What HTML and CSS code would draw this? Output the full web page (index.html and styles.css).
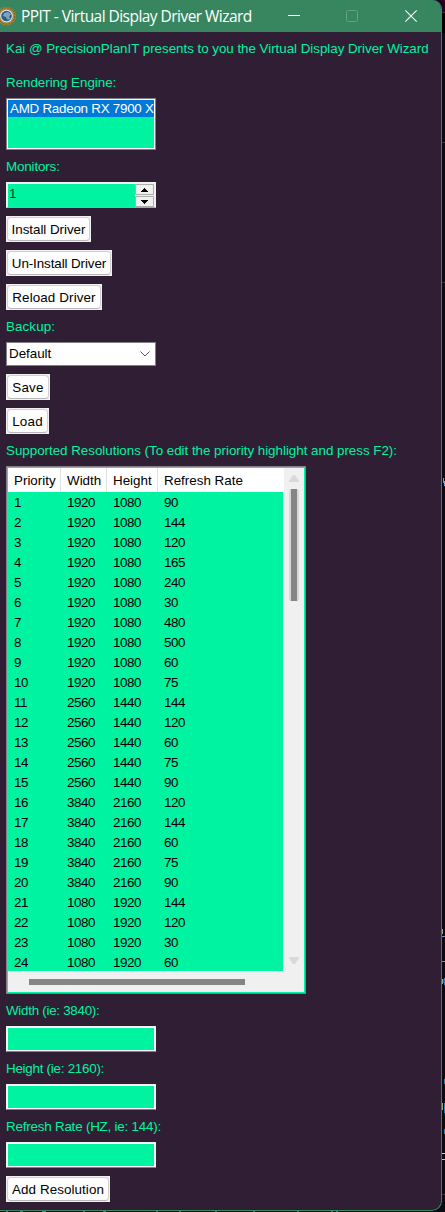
FILE: index.html
```html
<!DOCTYPE html>
<html lang="en">
<head>
<meta charset="utf-8">
<title>PPIT - Virtual Display Driver Wizard</title>
<link rel="stylesheet" href="styles.css">
</head>
<body>
<div class="window">
  <header class="titlebar">
    <svg class="logo" width="16" height="20" viewBox="0 0 16 20"><circle cx="6.500" cy="10" r="9.300" fill="#a98a45"/><circle cx="6.500" cy="10" r="8.200" fill="none" stroke="#6f5823" stroke-width="1" stroke-dasharray="2 1"/><circle cx="6.500" cy="10" r="6.300" fill="#e6ead8"/><circle cx="6.500" cy="10" r="5.300" fill="#255b9e"/><path d="M4 7l4-1 3 2-2 3 2 2-4 1-1-3-3-1z" fill="#7fa3bd"/><path d="M3 12l3 3 2-2z" fill="#25734c"/></svg>
    <h1 class="title">PPIT - Virtual Display Driver Wizard</h1>
    <div class="controls">
      <svg width="144" height="20" viewBox="0 0 144 20" fill="none"><path d="M2 9.500h12" stroke="#fff"/><rect x="60.500" y="4.500" width="11" height="11" rx="1" stroke="#62a080"/><path d="M119.300 4.300l11.400 11.400M130.700 4.300l-11.400 11.400" stroke="#fff" stroke-width="1.100"/></svg>
    </div>
  </header>
  <main class="form">
    <p class="label intro">Kai @ PrecisionPlanIT presents to you the Virtual Display Driver Wizard</p>
    <p class="label engine">Rendering Engine:</p>
    <div class="listbox"><div class="option">AMD Radeon RX 7900 X</div></div>
    <p class="label monitors">Monitors:</p>
    <div class="spinbox"><span class="value">1</span>
      <svg width="20" height="23" viewBox="0 0 20 23"><path d="M0 0h20v23H0z" fill="#f0f0f0"/><path d="M.5.500h18v10H.5zM.5 12.500h18v10H.5z" fill="#f0f0f0" stroke="#adadad"/><path d="M9 4h1v1h1v1h1v1h1v1H6V7h1V6h1V5h1zM6 16h7v1h-1v1h-1v1h-1v1H9v-1H8v-1H7v-1H6z" fill="#000"/></svg>
    </div>
    <div class="button install"><span>Install Driver</span></div>
    <div class="button uninstall"><span>Un-Install Driver</span></div>
    <div class="button reload"><span>Reload Driver</span></div>
    <p class="label backup">Backup:</p>
    <div class="combo"><span>Default</span><svg width="10" height="6" viewBox="0 0 10 6"><path d="M.5.500L5 5 9.500.500" fill="none" stroke="#555"/></svg></div>
    <div class="button save"><span>Save</span></div>
    <div class="button load"><span>Load</span></div>
    <p class="label supported">Supported Resolutions (To edit the priority highlight and press F2):</p>
    <div class="tree">
      <div class="table">
        <div class="row head"><span>Priority</span><span>Width</span><span>Height</span><span>Refresh Rate</span></div>
        <div class="row"><span>1</span><span>1920</span><span>1080</span><span>90</span></div>
        <div class="row"><span>2</span><span>1920</span><span>1080</span><span>144</span></div>
        <div class="row"><span>3</span><span>1920</span><span>1080</span><span>120</span></div>
        <div class="row"><span>4</span><span>1920</span><span>1080</span><span>165</span></div>
        <div class="row"><span>5</span><span>1920</span><span>1080</span><span>240</span></div>
        <div class="row"><span>6</span><span>1920</span><span>1080</span><span>30</span></div>
        <div class="row"><span>7</span><span>1920</span><span>1080</span><span>480</span></div>
        <div class="row"><span>8</span><span>1920</span><span>1080</span><span>500</span></div>
        <div class="row"><span>9</span><span>1920</span><span>1080</span><span>60</span></div>
        <div class="row"><span>10</span><span>1920</span><span>1080</span><span>75</span></div>
        <div class="row"><span>11</span><span>2560</span><span>1440</span><span>144</span></div>
        <div class="row"><span>12</span><span>2560</span><span>1440</span><span>120</span></div>
        <div class="row"><span>13</span><span>2560</span><span>1440</span><span>60</span></div>
        <div class="row"><span>14</span><span>2560</span><span>1440</span><span>75</span></div>
        <div class="row"><span>15</span><span>2560</span><span>1440</span><span>90</span></div>
        <div class="row"><span>16</span><span>3840</span><span>2160</span><span>120</span></div>
        <div class="row"><span>17</span><span>3840</span><span>2160</span><span>144</span></div>
        <div class="row"><span>18</span><span>3840</span><span>2160</span><span>60</span></div>
        <div class="row"><span>19</span><span>3840</span><span>2160</span><span>75</span></div>
        <div class="row"><span>20</span><span>3840</span><span>2160</span><span>90</span></div>
        <div class="row"><span>21</span><span>1080</span><span>1920</span><span>144</span></div>
        <div class="row"><span>22</span><span>1080</span><span>1920</span><span>120</span></div>
        <div class="row"><span>23</span><span>1080</span><span>1920</span><span>30</span></div>
        <div class="row"><span>24</span><span>1080</span><span>1920</span><span>60</span></div>
      </div>
      <div class="vscroll">
        <svg width="10" height="7" viewBox="0 0 10 7"><path d="M4 0h2l4 6v1H0V6z" fill="#d9d9d9"/></svg>
        <div class="vthumb"></div>
        <svg class="down" width="10" height="7" viewBox="0 0 10 7"><path d="M0 0h10v1L6 7H4L0 1z" fill="#d9d9d9"/></svg>
      </div>
      <div class="hscroll"><div class="hthumb"></div></div>
    </div>
    <p class="label width">Width (ie: 3840):</p>
    <div class="entry"></div>
    <p class="label height">Height (ie: 2160):</p>
    <div class="entry"></div>
    <p class="label refresh">Refresh Rate (HZ, ie: 144):</p>
    <div class="entry"></div>
    <div class="button add"><span>Add Resolution</span></div>
  </main>
</div>
<svg class="desktop" width="445" height="1212" viewBox="0 0 445 1212" shape-rendering="crispEdges">
  <path d="M0 0h445v1212H0z" fill="#090c11"/>
  <path d="M425 0h20v12h-20z" fill="#240022"/><path d="M442 12h3v1h-3z" fill="#572052"/><path d="M442 13h3v20h-3z" fill="#000"/>
  <path d="M442 142h3v1h-3zM442 282h3v1h-3zM442 1194h3v1h-3z" fill="#30343a"/>
  <path d="M442 936h3v1h-3zM442 961h3v1h-3z" fill="#6e98b4"/>
  <path d="M443 478h1v3h1v5h-1v-3h-1z" fill="#6aa5d8"/>
  <path d="M442 929h1v5h-1zM442 979h1v5h-1zM442 1103h1v7h-1z" fill="#a0a477"/>
  <path d="M443 979h1v4h-1z" fill="#b5203b"/><path d="M444 978h1v7h-1zM444 1079h1v5h-1zM444 1103h1v10h-1zM444 1129h1v5h-1z" fill="#2685b8"/>
  <path d="M442 1153h3v1h-3zM442 1159h3v1h-3z" fill="#c4c5ce"/>
  <path d="M6 1211h2v1H6zM20 1211h3v1h-3zM42 1211h4v1h-4zM83 1211h2v1h-2zM103 1211h3v1h-3zM156 1211h2v1h-2zM179 1211h2v1h-2zM215 1211h2v1h-2zM253 1211h2v1h-2zM297 1211h2v1h-2zM331 1211h2v1h-2zM336 1211h2v1h-2z" fill="#597274"/>
</svg>
</body>
</html>
```
FILE: styles.css
```css
* { box-sizing: border-box; }
body { margin: 0; width: 445px; height: 1212px; overflow: hidden; position: relative; font-family: "Liberation Sans", Arial, sans-serif; font-size: 13.4px; line-height: 18px; letter-spacing: -0.04px; color: #000; }
.desktop { position: absolute; left: 0; top: 0; z-index: -1; }
.window { width: 442px; height: 1211px; background: #301e34; border: solid #328761; border-width: 0 1px 1px 0; border-radius: 0 9px 10px 0; overflow: hidden; white-space: nowrap; }
.titlebar { height: 32px; width: 442px; background: #378660; display: flex; align-items: center; color: #fff; }
.logo { margin-right: 5px; flex: none; }
.title { margin: 0; width: 265px; font: 400 15.5px/20px "Open Sans", "Noto Sans", sans-serif; letter-spacing: -0.54px; }
.controls { display: flex; }
.form { padding: 8px 0 0 6px; display: flex; flex-direction: column; align-items: flex-start; gap: 8px; }
.label { margin: 0; height: 16px; color: #00f3a1; }
.intro { margin-bottom: 10px; }
.supported { letter-spacing: -0.03px; }
.monitors { letter-spacing: -0.15px; }
.backup { letter-spacing: 0.1px; }
.width { letter-spacing: -0.28px; }
.height { letter-spacing: -0.26px; }
.refresh { letter-spacing: -0.21px; }
.listbox { width: 150px; height: 52px; background: #00f3a1; border: 1px solid #828086; box-shadow: inset 0 0 0 1px #fff; padding: 1px; }
.option { height: 17px; background: #0078d7; color: #fff; padding-left: 2px; overflow: hidden; line-height: 18px; letter-spacing: -0.26px; }
.spinbox { width: 150px; height: 26px; background: #00f3a1; border: solid #f0f0f0; border-width: 2px 1px 1px 2px; border-bottom-color: #a5a3a7; display: flex; justify-content: space-between; }
.value { padding: 1px 0 0 1px; color: #033b29; }
.button { height: 26px; background: #f0f0f0; padding: 1px; }
.button span { display: flex; height: 24px; padding-top: 1px; justify-content: center; align-items: center; border: 1px solid #d0d0d0; border-bottom-color: #b8b8b8; border-radius: 4px; background: #fdfdfd; }
.install { width: 85px; }
.uninstall { width: 106px; letter-spacing: -0.1px; }
.reload { width: 96px; letter-spacing: 0.12px; }
.save { width: 44px; letter-spacing: 0.2px; }
.load { width: 43px; letter-spacing: 0.2px; }
.add { width: 104px; letter-spacing: 0.08px; }
.combo { width: 150px; height: 24px; border: 1px solid #828086; background: #fff; display: flex; align-items: center; justify-content: space-between; padding: 0 5px 0 2px; }
.tree { width: 300px; height: 528px; border: 1px solid #828086; box-shadow: inset 0 0 0 1px #00f3a1; padding: 1px; display: grid; grid-template: 503px 21px / 276px 20px; }
.table { overflow: hidden; background: #00f3a1; border-right: 1px solid #fff; letter-spacing: -0.45px; }
.row { display: grid; grid-template-columns: 53px 46px 51px 125px; height: 20px; line-height: 21px; }
.row span { padding-left: 6px; }
.head { height: 24px; line-height: 26px; background: #fff; letter-spacing: 0; }
.head span { height: 24px; }
.head span:nth-child(-n+3) { box-shadow: inset -1px 0 0 #e2e2e2; }
.vscroll { background: #f0f0f0; display: flex; flex-direction: column; align-items: center; padding-top: 7px; }
.vthumb { width: 10px; height: 112px; margin-top: 7px; background: #858585; border: solid #d8d8d8; border-width: 0 2px; border-radius: 2px; }
.down { margin-top: 356px; }
.hscroll { grid-column: 1 / 3; background: #f0f0f0; padding: 8px 0 0 21px; }
.hthumb { width: 216px; height: 6px; background: #858585; }
.entry { width: 150px; height: 26px; background: #00f3a1; border: 1px solid #f0f0f0; border-bottom-color: #828086; box-shadow: inset 0 0 0 1px #fff; border-radius: 1px; }
```
